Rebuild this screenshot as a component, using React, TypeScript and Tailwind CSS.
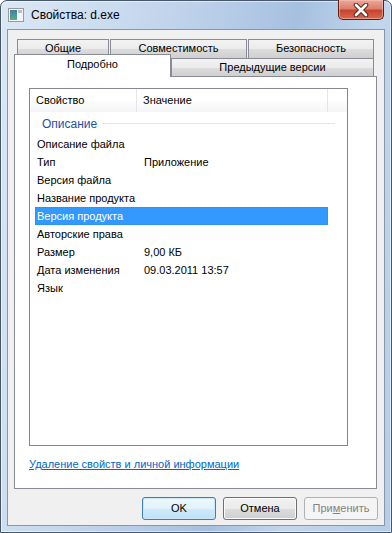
import React from "react";

const FONT = { fontFamily: '"Liberation Sans", Arial, sans-serif' };

function WinIcon() {
  return (
    <svg width="16" height="14" viewBox="0 0 16 14">
      <defs>
        <linearGradient id="ig" x1="0" y1="0" x2="0" y2="1">
          <stop offset="0" stopColor="#3f7fa8" />
          <stop offset="1" stopColor="#59b08a" />
        </linearGradient>
      </defs>
      <rect x="0.5" y="0.5" width="15" height="13" fill="#f4f4f4" stroke="#9a9a9a" />
      <rect x="2" y="2" width="7" height="10" fill="url(#ig)" />
      <rect x="10" y="2" width="4" height="3" fill="#b9c2cc" />
    </svg>
  );
}

function CloseButton() {
  return (
    <div className="self-start mr-[7px] w-[46px] h-[20px] rounded-b-[5px] border border-t-0 border-[#5a2018] bg-[linear-gradient(180deg,#eaa99a_0%,#dc7f6a_45%,#c8432e_55%,#d86a50_100%)] flex items-center justify-center shadow-[inset_0_0_0_1px_rgba(255,200,190,0.5)]">
      <svg width="16" height="14" viewBox="0 0 16 14">
        <path
          d="M3 2 L13 12 M13 2 L3 12"
          stroke="#5a2a22"
          strokeWidth="4.6"
          strokeLinecap="round"
        />
        <path
          d="M3 2 L13 12 M13 2 L3 12"
          stroke="#ffffff"
          strokeWidth="2.6"
          strokeLinecap="round"
        />
      </svg>
    </div>
  );
}

const tabBase =
  "flex items-center justify-center border border-b-0 border-[#898c95] bg-[linear-gradient(180deg,#f3f3f3_0%,#ebebeb_50%,#dddddd_51%,#cfcfcf_100%)] text-[11px] text-black";

function Row({
  name,
  value,
  selected,
}: {
  name: string;
  value?: string;
  selected?: boolean;
}) {
  return (
    <div className="h-[18px] flex">
      <div
        className={
          "ml-[5px] w-[293px] h-[18px] flex items-center " +
          (selected
            ? "bg-[#3399ff] text-white border border-dotted border-[#cc6600]"
            : "text-black border border-transparent")
        }
      >
        <span className="w-[108px] pl-[1px] whitespace-nowrap">{name}</span>
        <span className="whitespace-nowrap">{value ?? ""}</span>
      </div>
    </div>
  );
}

function Button({
  children,
  variant,
}: {
  children: React.ReactNode;
  variant: "default" | "normal" | "disabled";
}) {
  if (variant === "disabled") {
    return (
      <div className="w-[74px] h-[23px] rounded-[3px] border border-[#adb2b5] bg-[#f4f4f4] flex items-center justify-center text-[11px] text-[#838383]">
        {children}
      </div>
    );
  }
  if (variant === "default") {
    return (
      <div className="w-[74px] h-[23px] rounded-[3px] border border-[#3c7fb1] bg-[linear-gradient(180deg,#eef7fd_0%,#e2f2fc_50%,#cfeafb_51%,#bfe2f7_100%)] shadow-[inset_0_0_0_1px_#c8e8fa] flex items-center justify-center text-[11px] text-black">
        {children}
      </div>
    );
  }
  return (
    <div className="w-[74px] h-[23px] rounded-[3px] border border-[#707070] bg-[linear-gradient(180deg,#f2f2f2_0%,#ebebeb_50%,#dddddd_51%,#cfcfcf_100%)] shadow-[inset_0_0_0_1px_#fcfcfc] flex items-center justify-center text-[11px] text-black">
      {children}
    </div>
  );
}

export default function App() {
  return (
    <div className="w-[392px] h-[533px] overflow-hidden bg-white" style={FONT}>
      <div className="w-[392px] h-[533px] flex flex-col rounded-t-[7px] border border-[#46576b] bg-[linear-gradient(100deg,#dbe7f4_0%,#cadbef_25%,#b3cae6_50%,#a6c0e0_62%,#c2d6ec_78%,#b5cde8_100%)] shadow-[inset_0_0_0_1px_rgba(255,255,255,0.55)]">
        {/* Title bar */}
        <div className="h-[28px] flex items-center shrink-0">
          <div className="ml-[7px] w-[16px] h-[14px] flex items-center">
            <WinIcon />
          </div>
          <span className="ml-[7px] text-[12px] text-black leading-none">
            Свойства: d.exe
          </span>
          <div className="ml-auto self-stretch flex">
            <div className="-mt-px flex">
              <CloseButton />
            </div>
          </div>
        </div>

        {/* Client area */}
        <div className="mx-[6px] mb-[6px] h-[497px] border border-[#8796a8] bg-[#f0f0f0] flex flex-col">
          <div className="pt-[9px] flex flex-col">
            {/* Tab row 1 */}
            <div className="ml-[9px] h-[19px] flex gap-[1px]">
              <div className={tabBase + " w-[92px] pb-[2px]"}>Общие</div>
              <div className={tabBase + " w-[137px] pb-[2px]"}>Совместимость</div>
              <div className={tabBase + " w-[126px] pb-[2px]"}>Безопасность</div>
            </div>
            {/* Tab row 2 */}
            <div className="ml-[6px] -mt-[4px] h-[22px] flex items-end relative z-10">
              <div className="w-[157px] h-[23px] -mb-px border border-b-0 border-[#898c95] bg-white flex items-center justify-center text-[11px] text-black pb-[3px]">
                Подробно
              </div>
              <div className={tabBase + " w-[203px] h-[18px]"}>Предыдущие версии</div>
            </div>
          </div>

          {/* Panel */}
          <div className="ml-[6px] w-[363px] h-[413px] border border-[#898c95] bg-white flex flex-col text-[11px]">
            {/* List box */}
            <div className="ml-[14px] mt-[11px] w-[319px] h-[358px] border border-[#828790] bg-white flex flex-col">
              {/* Header */}
              <div className="h-[23px] flex bg-[linear-gradient(180deg,#ffffff_0%,#ffffff_45%,#f4f5f7_100%)] text-black">
                <div className="w-[107px] border-r border-[#e3e5e8] flex items-center pl-[6px]">
                  Свойство
                </div>
                <div className="w-[191px] border-r border-[#e3e5e8] flex items-center pl-[6px]">
                  Значение
                </div>
                <div className="flex-1" />
              </div>
              {/* Group */}
              <div className="h-[23px] flex items-center pl-[12px]">
                <span className="text-[#1f4fa8] text-[12px] leading-none">Описание</span>
                <div className="ml-[5px] w-[233px] h-px bg-[#e0e6ef]" />
              </div>
              <Row name="Описание файла" />
              <Row name="Тип" value="Приложение" />
              <Row name="Версия файла" />
              <Row name="Название продукта" />
              <Row name="Версия продукта" selected />
              <Row name="Авторские права" />
              <Row name="Размер" value="9,00 КБ" />
              <Row name="Дата изменения" value="09.03.2011 13:57" />
              <Row name="Язык" />
            </div>
            <div className="ml-[14px] mt-[11px] h-[15px] flex items-center">
              <span className="text-[#0066cc] underline text-[11px]">
                Удаление свойств и личной информации
              </span>
            </div>
          </div>

          {/* Buttons */}
          <div className="mt-[8px] pr-[6px] flex justify-end gap-[7px]">
            <Button variant="default">OK</Button>
            <Button variant="normal">Отмена</Button>
            <Button variant="disabled">
              <span>
                При<span className="underline">м</span>енить
              </span>
            </Button>
          </div>
        </div>
      </div>
    </div>
  );
}
